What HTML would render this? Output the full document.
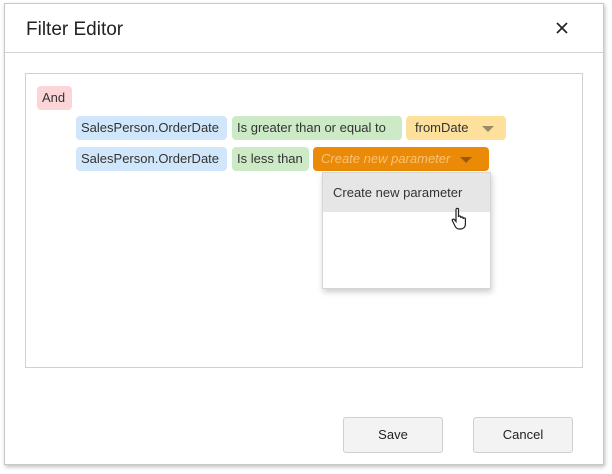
<!DOCTYPE html>
<html><head><style>
*{box-sizing:border-box;margin:0;padding:0}
body{width:612px;height:474px;background:#fff;font-family:"Liberation Sans",sans-serif;position:relative;overflow:hidden}
.dlg{position:absolute;left:4px;top:3px;width:600px;height:462px;border:1px solid #c8c8c8;box-shadow:1px 2px 4px rgba(0,0,0,.25);background:#fff}
.hdr{position:absolute;left:0;top:0;right:0;height:49px;border-bottom:1px solid #d4d4d4}
.title{position:absolute;left:21px;top:15px;font-size:19px;color:#222}
.x{position:absolute;left:550px;top:17px}
.box{position:absolute;left:25px;top:73px;width:558px;height:295px;border:1px solid #d0d0d0}
.c{position:absolute;height:24px;border-radius:4px;font-size:13px;line-height:24px;padding-left:5px;color:#333;white-space:nowrap}
.b{background:#cfe6fb}.g{background:#cdeac6}
.dd{position:absolute;left:322px;top:172px;width:169px;height:117px;background:#fff;border:1px solid #d6d6d6;box-shadow:1px 3px 6px rgba(0,0,0,.2)}
.btn{position:absolute;top:417px;width:100px;height:36px;border:1px solid #cfcfcf;border-radius:3px;background:#f3f3f3;font-size:13px;text-align:center;line-height:34px;color:#222}
.tri{display:inline-block;width:0;height:0;border-left:6px solid transparent;border-right:6px solid transparent;border-top:6px solid #9a8a6a;vertical-align:middle;margin-left:10px}
</style></head><body>
<div class="dlg"><div class="hdr"><div class="title">Filter Editor</div>
<svg class="x" width="14" height="14" viewBox="0 0 14 14"><path d="M2 2L12 12M12 2L2 12" stroke="#222" stroke-width="1.7"/></svg></div></div>
<div class="box"></div>
<div class="c" style="left:37px;top:86px;width:35px;background:#fbd5d8">And</div>
<div class="c b" style="left:76px;top:116px;width:151px">SalesPerson.OrderDate</div>
<div class="c g" style="left:232px;top:116px;width:170px">Is greater than or equal to</div>
<div class="c" style="left:406px;top:116px;width:100px;background:#fde09c;padding-left:9px">fromDate<span class="tri" style="margin-left:14px"></span></div>
<div class="c b" style="left:76px;top:147px;width:151px">SalesPerson.OrderDate</div>
<div class="c g" style="left:232px;top:147px;width:77px">Is less than</div>
<div class="c" style="left:313px;top:147px;width:176px;background:#ea8a06;color:#f8c27a;font-style:italic;padding-left:8px">Create new parameter<span class="tri" style="border-top-color:#9a5a10"></span></div>
<div class="dd"><div style="height:39px;background:#e6e6e6;font-size:13px;line-height:39px;padding-left:10px;color:#333">Create new parameter</div></div>
<svg style="position:absolute;left:451px;top:207px" width="20" height="24" viewBox="0 0 20 24"><path d="M5 2.5c0-1.5 2.5-1.5 2.5 0V10c0-1.3 2.3-1.3 2.3 0v1c0-1.3 2.3-1.3 2.3 0v1c0-1.3 2.3-1.3 2.3 0v5c0 3-2 5-5 5H8c-2 0-3-1-4-3L1.5 14c-.8-1.300.8-2.5 2-1.3L5 14.5z" fill="#fff" stroke="#222" stroke-width="1.2"/></svg>
<div class="btn" style="left:343px">Save</div>
<div class="btn" style="left:473px">Cancel</div>
</body></html>
